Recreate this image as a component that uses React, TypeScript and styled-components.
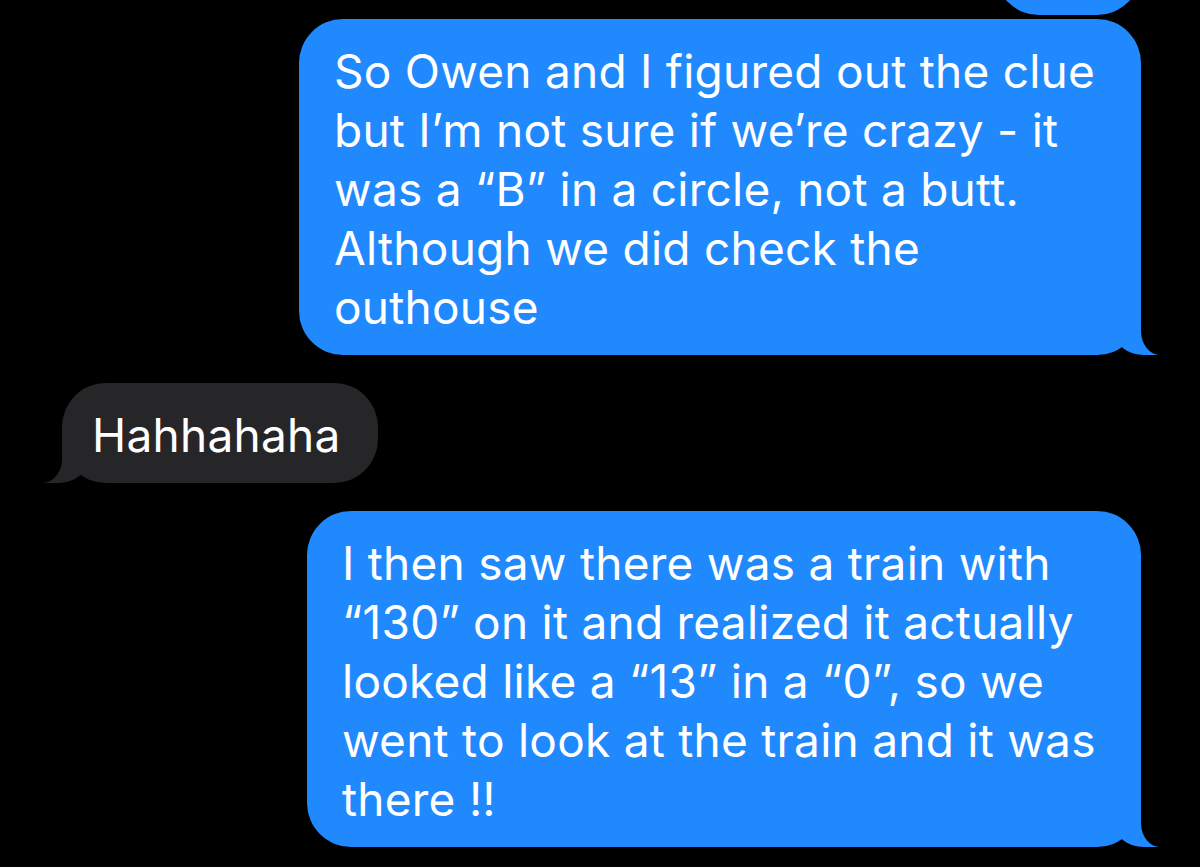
import { FunctionComponent } from 'react'
import styled, { createGlobalStyle } from 'styled-components'

const BLUE = '#2089fe'
const GRAY = '#262628'

interface IMessage {
  mine: boolean
  width: number
  gap: number
  lines: string[]
}

const messages: IMessage[] = [
  {
    mine: true,
    width: 842,
    gap: 4,
    lines: [
      'So Owen and I figured out the clue',
      'but I’m not sure if we’re crazy - it',
      'was a “B” in a circle, not a butt.',
      'Although we did check the',
      'outhouse'
    ]
  },
  {
    mine: false,
    width: 316,
    gap: 28,
    lines: ['Hahhahaha']
  },
  {
    mine: true,
    width: 834,
    gap: 28,
    lines: [
      'I then saw there was a train with',
      '“130” on it and realized it actually',
      'looked like a “13” in a “0”, so we',
      'went to look at the train and it was',
      'there !!'
    ]
  }
]

const App: FunctionComponent = () => {
  return (
    <>
      <GlobalStyle />
      <Thread>
        <Row $mine $gap={0}>
          <ScrolledBubble />
        </Row>
        {messages.map((msg, i) => (
          <Row $mine={msg.mine} $gap={msg.gap} key={`msg__${i}`}>
            <Bubble $mine={msg.mine} $width={msg.width}>
              {msg.lines.map((line, j) => (
                <Line key={`line__${i}_${j}`}>{line}</Line>
              ))}
            </Bubble>
          </Row>
        ))}
      </Thread>
    </>
  )
}

const GlobalStyle = createGlobalStyle`
  html, body {
    margin: 0;
    padding: 0;
    background: #000;
  }
  body {
    font-family: Inter, "Noto Sans", "Liberation Sans", sans-serif;
    -webkit-font-smoothing: antialiased;
  }
`

const Thread = styled.div`
  display: flex;
  flex-direction: column;
  box-sizing: border-box;
  width: 1200px;
  height: 867px;
  padding: 0 59px 0 62px;
  overflow: hidden;
  background: #000;
`

const Row = styled.div<{ $mine?: boolean; $gap: number }>`
  display: flex;
  flex-shrink: 0;
  justify-content: ${p => (p.$mine ? 'flex-end' : 'flex-start')};
  margin-top: ${p => p.$gap}px;
`

const ScrolledBubble = styled.div`
  width: 146px;
  height: 100px;
  margin-top: -85px;
  border-radius: 44px;
  background: ${BLUE};
`

const Bubble = styled.div<{ $mine: boolean; $width: number }>`
  position: relative;
  box-sizing: border-box;
  width: ${p => p.$width}px;
  padding: 23px 0 18px ${p => (p.$mine ? 35 : 30)}px;
  border-radius: 44px;
  background: ${p => (p.$mine ? BLUE : GRAY)};
  color: #fff;
  font-size: 46px;
  line-height: 59px;
  letter-spacing: 0.25px;
  white-space: nowrap;

  /* tail */
  &::before,
  &::after {
    content: '';
    position: absolute;
    bottom: 0;
    height: 44px;
  }

  &::before {
    width: 44px;
    background: ${p => (p.$mine ? BLUE : GRAY)};
    ${p =>
      p.$mine
        ? 'right: -17px; border-bottom-left-radius: 30px 24px;'
        : 'left: -18px; border-bottom-right-radius: 30px 24px;'}
  }

  &::after {
    width: 45px;
    background: #000;
    ${p =>
      p.$mine
        ? 'right: -45px; border-bottom-left-radius: 19px 24px;'
        : 'left: -45px; border-bottom-right-radius: 20px 24px;'}
  }
`

const Line = styled.span`
  display: block;
`

export default App
